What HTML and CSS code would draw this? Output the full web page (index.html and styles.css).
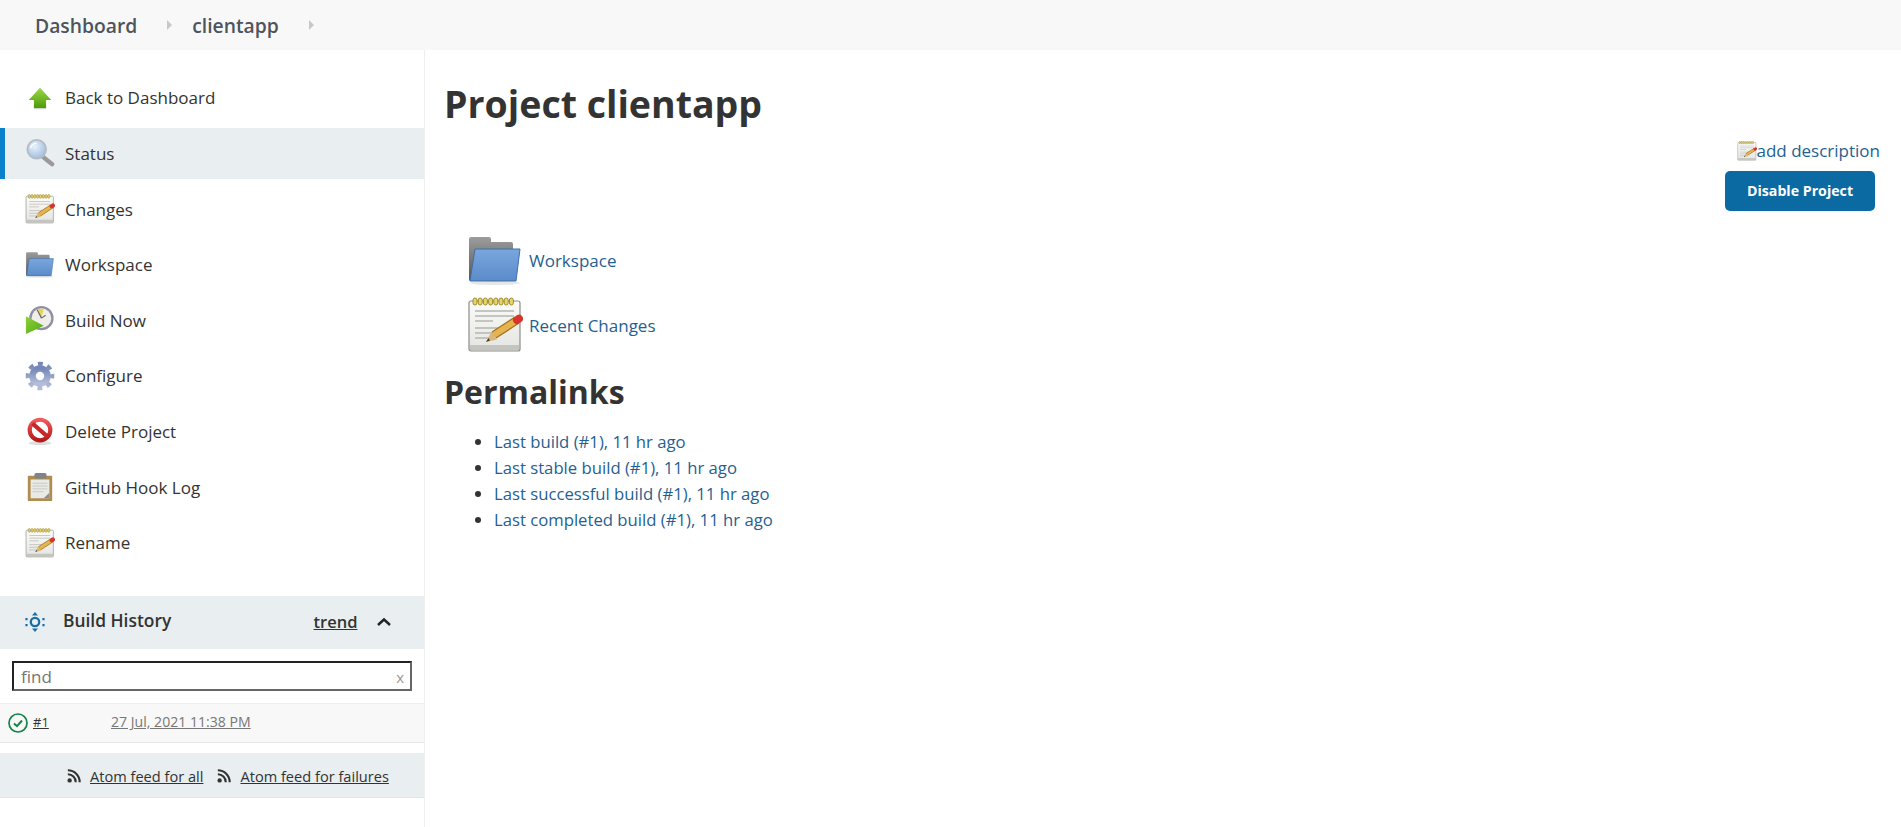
FILE: index.html
```html
<!DOCTYPE html>
<html lang="en">
<head>
<meta charset="utf-8">
<title>clientapp</title>
<link rel="stylesheet" href="styles.css">
</head>
<body>
<svg class="defs" width="0" height="0" aria-hidden="true">
  <defs>
    <linearGradient id="gGreen" x1="0" y1="0" x2="0" y2="1"><stop offset="0" stop-color="#9ad84a"/><stop offset="1" stop-color="#4e9a06"/></linearGradient>
    <linearGradient id="gFolder" x1="0" y1="0" x2="0" y2="1"><stop offset="0" stop-color="#7aa6de"/><stop offset="1" stop-color="#5a8bc9"/></linearGradient>
    <linearGradient id="gGrey" x1="0" y1="0" x2="0" y2="1"><stop offset="0" stop-color="#9c9c9c"/><stop offset="1" stop-color="#555"/></linearGradient>
    <linearGradient id="gPaper" x1="0" y1="0" x2="0" y2="1"><stop offset="0" stop-color="#fbfbf9"/><stop offset="1" stop-color="#e4e4e0"/></linearGradient>
    <radialGradient id="gLens" cx=".4" cy=".35" r=".7"><stop offset="0" stop-color="#e8f1fb"/><stop offset="1" stop-color="#9dbbdc"/></radialGradient>
    <linearGradient id="gRed" x1="0" y1="0" x2="0" y2="1"><stop offset="0" stop-color="#ef5a5a"/><stop offset="1" stop-color="#b51a1a"/></linearGradient>
    <linearGradient id="gGear" x1="0" y1="0" x2="0" y2="1"><stop offset="0" stop-color="#7487b8"/><stop offset="1" stop-color="#b4bcd8"/></linearGradient>
    <linearGradient id="gPlay" x1="0" y1="0" x2="1" y2="1"><stop offset="0" stop-color="#8fd33a"/><stop offset="1" stop-color="#4fa512"/></linearGradient>
    <symbol id="i-up" viewBox="0 0 32 32">
      <path d="M16 5 L28 18 H22.500 V27 H9.500 V18 H4 Z" fill="url(#gGreen)"/>
      <path d="M9.500 27 H22.500 V28 H9.500 Z" fill="#ccc"/>
    </symbol>
    <symbol id="i-search" viewBox="0 0 32 32">
      <path d="M19 20 L29 28" stroke="#9a9a9a" stroke-width="4.500" stroke-linecap="round"/>
      <circle cx="12.500" cy="12" r="10" fill="url(#gLens)" stroke="#b5bcc6" stroke-width="2"/>
      <path d="M6 11 a6.500 6.500 0 0 1 6.500-5.500" fill="none" stroke="#fff" stroke-width="1.500"/>
    </symbol>
    <symbol id="i-notes" viewBox="0 0 56 56">
      <rect x="2" y="4" width="51" height="50" rx="2" fill="url(#gPaper)" stroke="#8d8d8a" stroke-width="1.200"/>
      <rect x="3" y="48" width="49" height="5" fill="#c4c4c0"/>
      <g fill="#e6d46c" stroke="#8f7a1a" stroke-width=".8">
        <rect x="6" y="1" width="4" height="7" rx="2"/><rect x="11.200" y="1" width="4" height="7" rx="2"/>
        <rect x="16.400" y="1" width="4" height="7" rx="2"/><rect x="21.600" y="1" width="4" height="7" rx="2"/>
        <rect x="26.800" y="1" width="4" height="7" rx="2"/><rect x="32" y="1" width="4" height="7" rx="2"/>
        <rect x="37.200" y="1" width="4" height="7" rx="2"/><rect x="42.400" y="1" width="4" height="7" rx="2"/>
      </g>
      <path d="M8 14H47M8 19H47M8 24H26M8 31H36M8 36H26M8 41H24" stroke="#b5b5b1" stroke-width="1.300"/>
      <path d="M27 38 L50 23" stroke="#a8701a" stroke-width="8.500"/>
      <path d="M27 38 L50 23" stroke="#e3b44f" stroke-width="6"/>
      <path d="M24.500 34.500 L30 42.500 L19 45 Z" fill="#d9b77a"/>
      <path d="M21.500 41 L23 43.500 L19 45 Z" fill="#4a3d24"/>
      <path d="M50 23 L52 21.700" stroke="#d9342b" stroke-width="8" stroke-linecap="round"/>
    </symbol>
    <symbol id="i-folder" viewBox="0 0 56 56">
      <ellipse cx="28" cy="50" rx="25" ry="2" fill="#e6e6e6"/>
      <path d="M2 6 a2 2 0 0 1 2-2 H22 a2 2 0 0 1 2 2 V9 H44 a2 2 0 0 1 2 2 V48 H4 a2 2 0 0 1-2-2 Z" fill="url(#gGrey)"/>
      <path d="M8 16 H53 L49 48 H3 Z" fill="url(#gFolder)" stroke="#3f6fa8" stroke-width="1" stroke-linejoin="round"/>
    </symbol>
    <symbol id="i-build" viewBox="0 0 32 32">
      <circle cx="17.500" cy="14" r="13" fill="#8f8fa6"/>
      <circle cx="17.500" cy="14" r="10.500" fill="#efeee8"/>
      <path d="M17.500 14 L13 4.500 L20 3.800 Z" fill="#e9d25a"/>
      <path d="M17.500 14 L13 5 M17.500 14 L22 11" stroke="#666" stroke-width="1.200" fill="none"/>
      <path d="M1 12 L20 22 L1 31 Z" fill="url(#gPlay)"/>
    </symbol>
    <symbol id="i-gear" viewBox="0 0 32 32">
      <circle cx="16" cy="16" r="8" fill="none" stroke="url(#gGear)" stroke-width="7"/>
      <circle cx="16" cy="16" r="13" fill="none" stroke="url(#gGear)" stroke-width="4.500" stroke-dasharray="5.200 5.010" stroke-dashoffset="2.600"/>
    </symbol>
    <symbol id="i-delete" viewBox="0 0 32 32">
      <ellipse cx="16" cy="29" rx="12" ry="2" fill="#ddd"/>
      <circle cx="16" cy="15" r="11" fill="#fff" stroke="url(#gRed)" stroke-width="4.500"/>
      <path d="M8 8 L24 22" stroke="#c62828" stroke-width="4.500"/>
    </symbol>
    <symbol id="i-log" viewBox="0 0 32 32">
      <rect x="3" y="4" width="26" height="27" rx="1" fill="#b08d4f"/>
      <rect x="6" y="8" width="20" height="20" fill="#e9e9e6"/>
      <path d="M8 12H24M8 15H24M8 18H24M8 21H20" stroke="#c8c8c4"/>
      <path d="M20 28 L26 22 V28 Z" fill="#8f8f8f"/>
      <rect x="10" y="1" width="13" height="6" rx="2" fill="#7f8488"/>
    </symbol>
    <symbol id="i-rss" viewBox="0 0 16 16">
      <circle cx="3" cy="13" r="2.500" fill="#333"/>
      <path d="M1 6 a9 9 0 0 1 9 9 M1 1.500 a13.500 13.500 0 0 1 13.500 13.500" fill="none" stroke="#333" stroke-width="2.400"/>
    </symbol>
  </defs>
</svg>

<header class="topbar">
  <a class="crumb">Dashboard</a>
  <span class="crumb-arrow"></span>
  <a class="crumb">clientapp</a>
  <span class="crumb-arrow"></span>
</header>

<div class="page">
  <aside class="sidebar">
    <nav class="tasks">
      <a class="task"><svg class="task-icon"><use href="#i-up"/></svg><span>Back to Dashboard</span></a>
      <a class="task task-active"><svg class="task-icon"><use href="#i-search"/></svg><span>Status</span></a>
      <a class="task"><svg class="task-icon"><use href="#i-notes"/></svg><span>Changes</span></a>
      <a class="task"><svg class="task-icon"><use href="#i-folder"/></svg><span>Workspace</span></a>
      <a class="task"><svg class="task-icon"><use href="#i-build"/></svg><span>Build Now</span></a>
      <a class="task"><svg class="task-icon"><use href="#i-gear"/></svg><span>Configure</span></a>
      <a class="task"><svg class="task-icon"><use href="#i-delete"/></svg><span>Delete Project</span></a>
      <a class="task"><svg class="task-icon"><use href="#i-log"/></svg><span>GitHub Hook Log</span></a>
      <a class="task"><svg class="task-icon"><use href="#i-notes"/></svg><span>Rename</span></a>
    </nav>

    <section class="history">
      <div class="history-head">
        <svg class="history-icon" viewBox="0 0 20 20">
          <circle cx="10" cy="10" r="4.200" fill="none" stroke="#1a6ea8" stroke-width="2.300"/>
          <path d="M10 0 L13 3.500 H7 Z M10 20 L13 16.500 H7 Z" fill="#1a6ea8"/>
          <path d="M1.500 6v2.200M1.500 12v2.200M18.500 6v2.200M18.500 12v2.200" stroke="#1a6ea8" stroke-width="2.200"/>
        </svg>
        <span class="history-title">Build History</span>
        <a class="trend">trend</a>
        <svg class="chevron" viewBox="0 0 16 10"><path d="M2 8 L8 2.500 L14 8" fill="none" stroke="#222" stroke-width="2.400"/></svg>
      </div>
      <div class="search">
        <div class="search-box"><span class="search-hint">find</span><span class="search-x">x</span></div>
      </div>
      <div class="build-row">
        <svg class="build-check" viewBox="0 0 20 20">
          <circle cx="10" cy="10" r="9" fill="none" stroke="#138347" stroke-width="1.700"/>
          <path d="M6 10.500 L9 13.200 L14 7.500" fill="none" stroke="#138347" stroke-width="2"/>
        </svg>
        <a class="build-num">#1</a>
        <a class="build-date">27 Jul, 2021 11:38 PM</a>
      </div>
      <div class="feeds">
        <svg class="rss"><use href="#i-rss"/></svg><a class="feed-link">Atom feed for all</a>
        <svg class="rss rss-second"><use href="#i-rss"/></svg><a class="feed-link">Atom feed for failures</a>
      </div>
    </section>
  </aside>

  <main class="main">
    <h1 class="title">Project clientapp</h1>
    <div class="actions">
      <div class="describe"><svg class="describe-icon"><use href="#i-notes"/></svg><a class="link">add description</a></div>
      <button class="disable" type="button">Disable Project</button>
    </div>
    <div class="main-links">
      <div class="main-link"><svg class="main-link-icon"><use href="#i-folder"/></svg><a class="link">Workspace</a></div>
      <div class="main-link"><svg class="main-link-icon"><use href="#i-notes"/></svg><a class="link">Recent Changes</a></div>
    </div>
    <h2 class="subtitle">Permalinks</h2>
    <ul class="permalinks">
      <li><a class="link">Last build (#1), 11 hr ago</a></li>
      <li><a class="link">Last stable build (#1), 11 hr ago</a></li>
      <li><a class="link">Last successful build (#1), 11 hr ago</a></li>
      <li><a class="link">Last completed build (#1), 11 hr ago</a></li>
    </ul>
  </main>
</div>
</body>
</html>
```
FILE: styles.css
```css
* { box-sizing: border-box; }
html, body { height: 100%; }
body {
  margin: 0;
  overflow: hidden;
  background: #fff;
  color: #333;
  font-family: "Open Sans", "Noto Sans", sans-serif;
  font-size: 17px;
  display: flex;
  flex-direction: column;
}
.defs { position: absolute; }

.topbar {
  height: 50px;
  flex: none;
  background: #f8f8f8;
  display: flex;
  align-items: center;
  padding-left: 35px;
  color: #4d545d;
  font-size: 19.300px;
  font-weight: 600;
}
.crumb-arrow {
  width: 0;
  height: 0;
  margin: 0 20px 0 30px;
  border-left: 5px solid #c8c8c8;
  border-top: 5px solid transparent;
  border-bottom: 5px solid transparent;
}

.page { flex: 1; display: flex; min-height: 0; }

.sidebar {
  width: 425px;
  flex: none;
  border-right: 1px solid #eee;
  padding-top: 22.400px;
}
.tasks { display: flex; flex-direction: column; gap: 4.600px; }
.task {
  height: 51px;
  display: flex;
  align-items: center;
  gap: 10px;
  padding-left: 25px;
}
.task-active {
  background: #e9eef1;
  box-shadow: inset 5px 0 0 #0b80cb;
}
.task-icon { width: 30px; height: 30px; flex: none; }

.history { margin-top: 27.500px; }
.history-head {
  height: 53px;
  background: #e9eef1;
  display: flex;
  align-items: center;
  padding-left: 25px;
}
.history-icon { width: 20px; height: 20px; margin-right: 18px; }
.history-title { font-weight: 600; font-size: 17.400px; flex: 1; margin-bottom: 4px; }
.trend { font-weight: 600; text-decoration: underline; font-size: 16.500px; margin: 0 18px 2px 0; }
.chevron { width: 16px; height: 10px; margin-right: 32.500px; }

.search { padding: 12px; }
.search-box {
  height: 30px;
  width: 400px;
  border: 2px solid;
  border-color: #222 #666 #666 #222;
  display: flex;
  justify-content: space-between;
  align-items: center;
  padding: 2px 6px 0 7px;
  color: #757575;
  font-size: 17px;
}
.search-x { font-size: 15px; color: #999; }

.build-row {
  height: 40px;
  background: #f8f8f8;
  border-top: 1px solid #eee;
  border-bottom: 1px solid #e8e8e8;
  display: flex;
  align-items: center;
  padding-left: 8px;
}
.build-check { width: 20px; height: 20px; margin-right: 5px; }
.build-num { text-decoration: underline; width: 78px; font-size: 13px; margin-bottom: 2px; }
.build-date { text-decoration: underline; color: #777; font-size: 14.100px; margin-bottom: 2px; }

.feeds {
  margin-top: 10px;
  height: 45px;
  background: #e9eef1;
  border-bottom: 1px solid #e4e4e4;
  display: flex;
  align-items: center;
  padding: 2px 0 0 67px;
  font-size: 14.600px;
}
.rss { width: 14px; height: 14px; margin-right: 9px; }
.rss-second { margin-left: 14px; }
.feed-link { text-decoration: underline; }

.main { flex: 1; padding-left: 19px; min-width: 0; }
.link { color: #1f6192; }
.title {
  margin: 29px 0 0;
  font-size: 37.500px;
  line-height: 50px;
  font-weight: 700;
}
.actions {
  display: flex;
  flex-direction: column;
  align-items: flex-end;
  padding-right: 21px;
}
.describe { display: flex; align-items: center; margin-top: 10px; }
.describe-icon { width: 20px; height: 20px; }
.disable {
  width: 150px;
  height: 40px;
  margin: 8.500px 5px 0 0;
  background: #0b6aa2;
  border: 0;
  border-radius: 5px;
  color: #fff;
  font: 700 14.200px "Open Sans", "Noto Sans", sans-serif;
}
.main-links { padding-left: 23px; margin-top: 23px; display: flex; flex-direction: column; gap: 10.800px; }
.main-link { display: flex; align-items: center; gap: 6px; height: 54px; }
.main-link-icon { width: 56px; height: 56px; flex: none; }
.subtitle {
  margin: 17px 0 0;
  font-size: 32px;
  line-height: 46px;
  font-weight: 700;
}
.permalinks {
  margin: 14px 0 0;
  padding-left: 50px;
  font-size: 16.700px;
  line-height: 26px;
}
```
